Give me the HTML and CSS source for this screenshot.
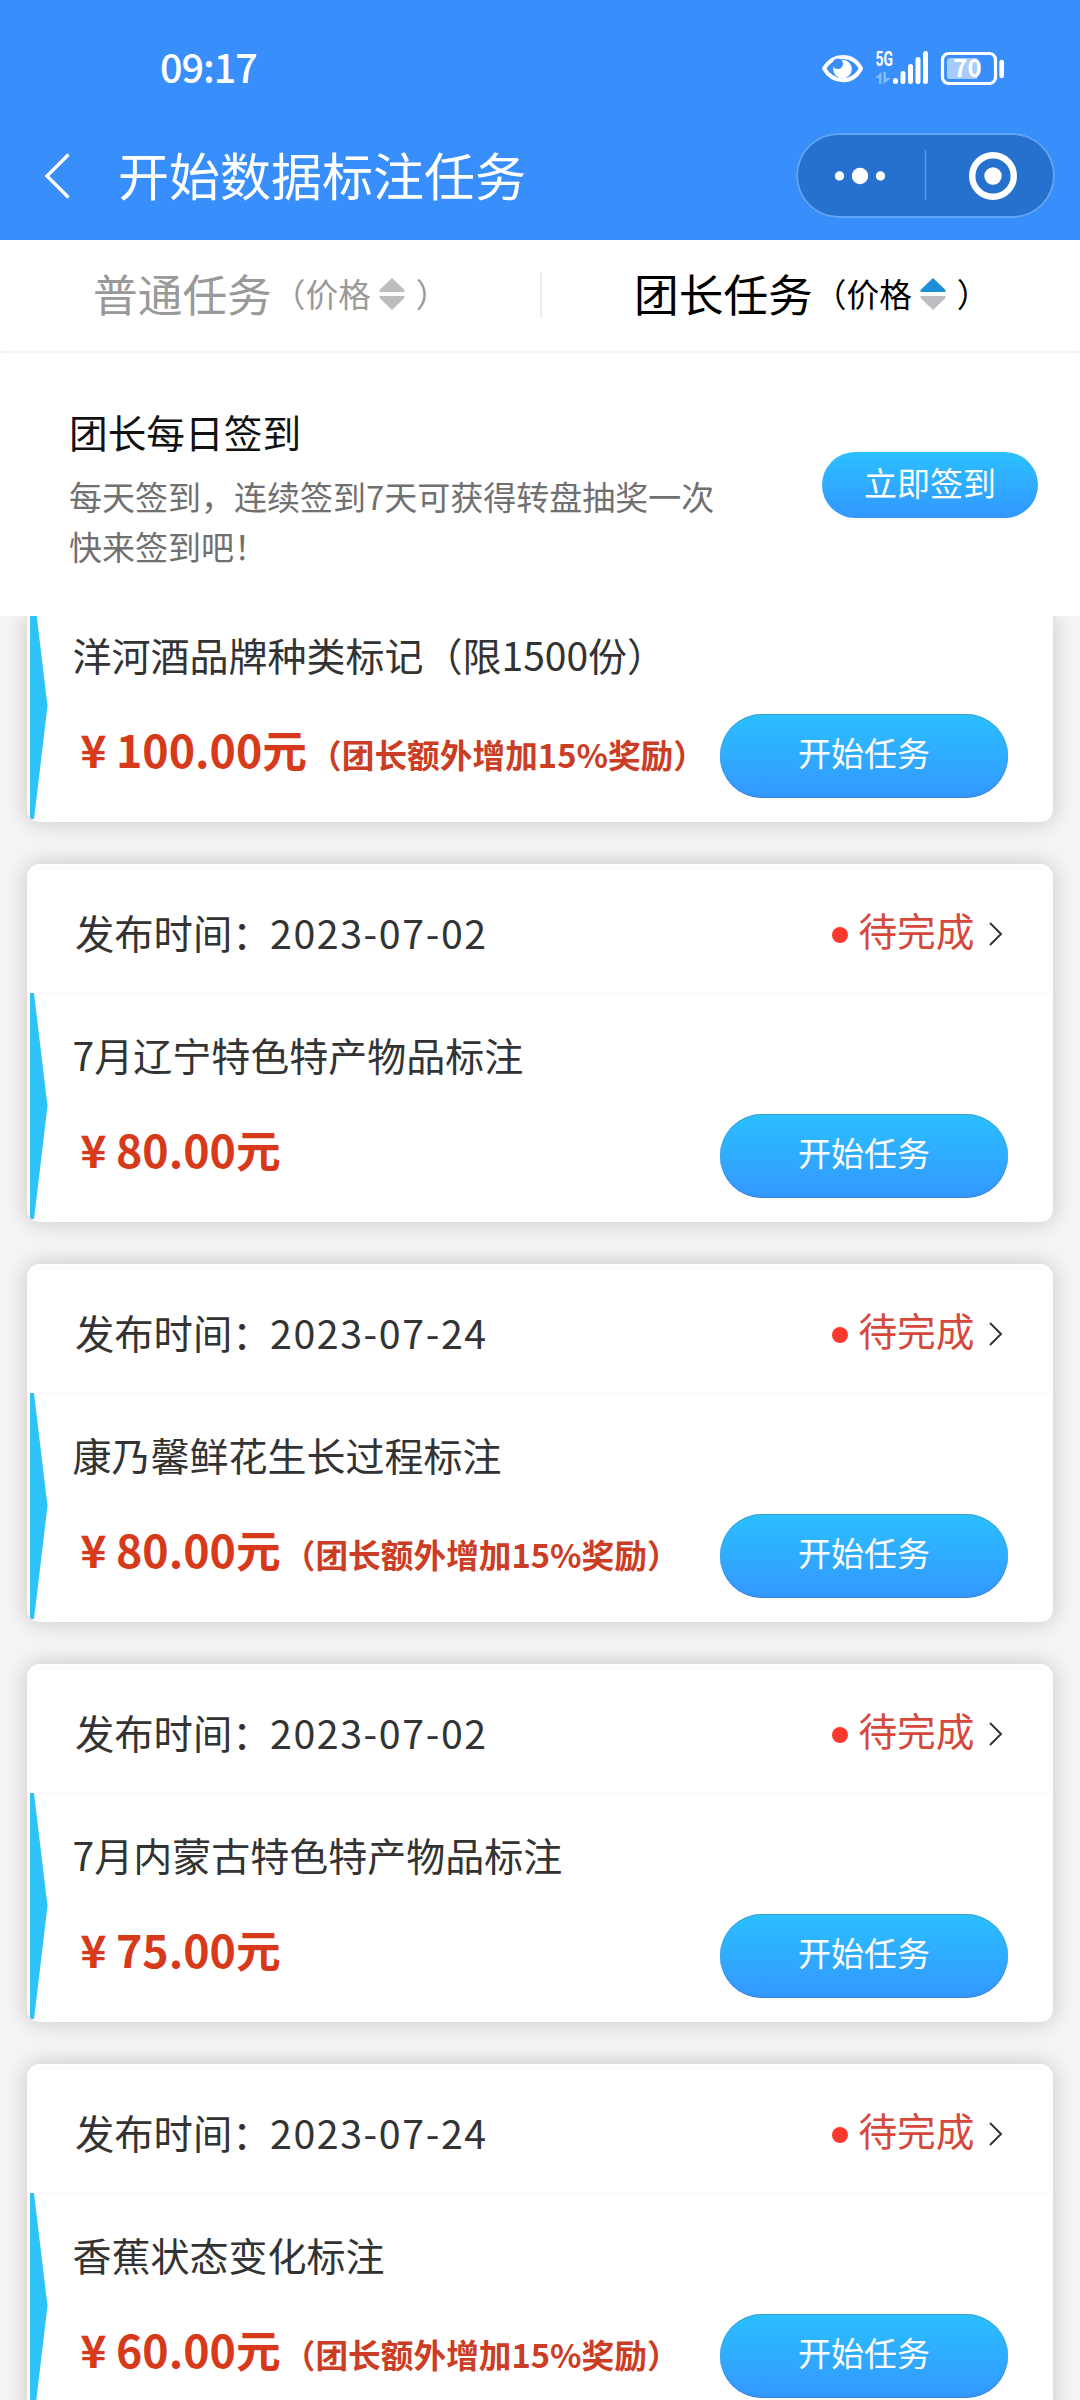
FILE: index.html
```html
<!DOCTYPE html>
<html lang="zh-CN">
<head>
<meta charset="utf-8">
<title>开始数据标注任务</title>
<link rel="stylesheet" href="styles.css">
</head>
<body>
<header class="top">
  <div class="status-bar">
    <span class="clock">09:17</span>
    <svg class="status-icons" width="190" height="50" viewBox="816 40 190 50">
      <path d="M824 68.500C833 53 853 53 861 68.500C853 84 833 84 824 68.500Z" fill="none" stroke="#fff" stroke-width="4" stroke-linejoin="round"/>
      <circle cx="842.500" cy="69" r="9.300" fill="#fff"/>
      <circle cx="837.800" cy="63.800" r="5.200" fill="#388efa"/>
      <text class="net" x="875.500" y="66" textLength="17.500" lengthAdjust="spacingAndGlyphs">5G</text>
      <path d="M875 78L881.500 72V84H879V78ZM883.500 72V84L891 78H886V72Z" fill="#86bcfd"/>
      <g stroke="#fff" stroke-width="5" stroke-linecap="round">
        <path d="M895.500 80.500V81.500M903 73.500V81.500M910.500 66.500V81.500M918 59.500V81.500M925.500 53.500V81.500"/>
      </g>
      <rect x="942.500" y="53.500" width="53" height="30" rx="6" fill="none" stroke="#fff" stroke-width="3.200"/>
      <rect x="947" y="58" width="31" height="21" rx="3" fill="#a5ccfd"/>
      <text class="charge" x="967.500" y="77" text-anchor="middle">70</text>
      <path d="M1001.700 62V76" stroke="#fff" stroke-width="4.600" stroke-linecap="round"/>
    </svg>
  </div>
  <div class="nav-bar">
    <svg class="back" width="30" height="50" viewBox="0 0 30 50"><path d="M26.500 3.500L5 25L26.500 46.500" fill="none" stroke="#fff" stroke-width="3.400"/></svg>
    <h1 class="page-title">开始数据标注任务</h1>
    <div class="capsule">
      <svg width="259" height="85" viewBox="0 0 259 85">
        <g fill="#fff">
          <circle cx="43.500" cy="43" r="4.700"/><circle cx="64" cy="43" r="8.200"/><circle cx="84.500" cy="43" r="4.700"/>
          <circle cx="197" cy="43" r="8.700"/>
        </g>
        <circle cx="197" cy="43" r="20.800" fill="none" stroke="#fff" stroke-width="6.400"/>
        <path d="M129.500 17V67" stroke="#5b97de" stroke-width="1.500"/>
      </svg>
    </div>
  </div>
</header>

<nav class="tabs">
  <div class="tab">
    <span class="tab-name">普通任务</span><span class="tab-sort">（价格</span>
    <svg class="sorter" width="28" height="34" viewBox="0 0 28 34"><path d="M14 1L26.500 13V15H1.500V13Z" fill="#bdbdbd"/><path d="M14 33L26.500 21V19H1.500V21Z" fill="#bdbdbd"/></svg>
    <span class="tab-sort">）</span>
  </div>
  <div class="tab tab-active">
    <span class="tab-name">团长任务</span><span class="tab-sort">（价格</span>
    <svg class="sorter" width="28" height="34" viewBox="0 0 28 34"><path d="M14 1L26.500 13V15H1.500V13Z" fill="#1c8fd6"/><path d="M14 33L26.500 21V19H1.500V21Z" fill="#bcbec2"/></svg>
    <span class="tab-sort">）</span>
  </div>
</nav>

<section class="checkin">
  <div class="checkin-text">
    <h2 class="checkin-title">团长每日签到</h2>
    <p class="checkin-desc">每天签到，连续签到7天可获得转盘抽奖一次<br>快来签到吧！</p>
  </div>
  <button class="btn btn-checkin">立即签到</button>
</section>

<main class="list">
  <article class="card card-cut">
    <div class="card-body">
      <svg class="flag" width="18" height="226" viewBox="0 0 18 226"><path d="M0 0H4L17.500 113L4 226H0Z" fill="#2fc2f8"/></svg>
      <h3 class="task">洋河酒品牌种类标记（限1500份）</h3>
      <div class="pay"><p class="price"><span class="yen">¥</span><span class="amount">100.00</span>元<span class="bonus">（团长额外增加15%奖励）</span></p><button class="btn btn-start">开始任务</button></div>
    </div>
  </article>

  <article class="card">
    <div class="card-head"><span class="time">发布时间：<span class="date">2023-07-02</span></span><span class="state">待完成</span>
      <svg class="more" width="16" height="26" viewBox="0 0 16 26"><path d="M2 2L13 13L2 24" fill="none" stroke="#333" stroke-width="2"/></svg></div>
    <div class="card-body">
      <svg class="flag" width="18" height="226" viewBox="0 0 18 226"><path d="M0 0H4L17.500 113L4 226H0Z" fill="#2fc2f8"/></svg>
      <h3 class="task">7月辽宁特色特产物品标注</h3>
      <div class="pay"><p class="price"><span class="yen">¥</span><span class="amount">80.00</span>元</p><button class="btn btn-start">开始任务</button></div>
    </div>
  </article>

  <article class="card">
    <div class="card-head"><span class="time">发布时间：<span class="date">2023-07-24</span></span><span class="state">待完成</span>
      <svg class="more" width="16" height="26" viewBox="0 0 16 26"><path d="M2 2L13 13L2 24" fill="none" stroke="#333" stroke-width="2"/></svg></div>
    <div class="card-body">
      <svg class="flag" width="18" height="226" viewBox="0 0 18 226"><path d="M0 0H4L17.500 113L4 226H0Z" fill="#2fc2f8"/></svg>
      <h3 class="task">康乃馨鲜花生长过程标注</h3>
      <div class="pay"><p class="price"><span class="yen">¥</span><span class="amount">80.00</span>元<span class="bonus">（团长额外增加15%奖励）</span></p><button class="btn btn-start">开始任务</button></div>
    </div>
  </article>

  <article class="card">
    <div class="card-head"><span class="time">发布时间：<span class="date">2023-07-02</span></span><span class="state">待完成</span>
      <svg class="more" width="16" height="26" viewBox="0 0 16 26"><path d="M2 2L13 13L2 24" fill="none" stroke="#333" stroke-width="2"/></svg></div>
    <div class="card-body">
      <svg class="flag" width="18" height="226" viewBox="0 0 18 226"><path d="M0 0H4L17.500 113L4 226H0Z" fill="#2fc2f8"/></svg>
      <h3 class="task">7月内蒙古特色特产物品标注</h3>
      <div class="pay"><p class="price"><span class="yen">¥</span><span class="amount">75.00</span>元</p><button class="btn btn-start">开始任务</button></div>
    </div>
  </article>

  <article class="card">
    <div class="card-head"><span class="time">发布时间：<span class="date">2023-07-24</span></span><span class="state">待完成</span>
      <svg class="more" width="16" height="26" viewBox="0 0 16 26"><path d="M2 2L13 13L2 24" fill="none" stroke="#333" stroke-width="2"/></svg></div>
    <div class="card-body">
      <svg class="flag" width="18" height="226" viewBox="0 0 18 226"><path d="M0 0H4L17.500 113L4 226H0Z" fill="#2fc2f8"/></svg>
      <h3 class="task">香蕉状态变化标注</h3>
      <div class="pay"><p class="price"><span class="yen">¥</span><span class="amount">60.00</span>元<span class="bonus">（团长额外增加15%奖励）</span></p><button class="btn btn-start">开始任务</button></div>
    </div>
  </article>
</main>
</body>
</html>
```
FILE: styles.css
```css
* { box-sizing: border-box; }
body {
  margin: 0;
  width: 1080px;
  height: 2400px;
  overflow: hidden;
  display: flex;
  flex-direction: column;
  background: #f6f4f6;
  color: #333;
  font-family: "Noto Sans CJK SC", sans-serif;
}
h1, h2, h3, p { margin: 0; font-weight: 400; }
svg { display: block; flex: none; }

.top { flex: none; height: 240px; background: #388efa; color: #fff; }
.status-bar { display: flex; justify-content: space-between; height: 133px; padding: 40px 74px 0 160px; }
.clock { padding-top: 4px; font-size: 39.500px; line-height: 44px; font-weight: 500; letter-spacing: -1px; }
.net { fill: #fff; font: 700 20.500px Roboto, sans-serif; }
.charge { fill: #fff; font-size: 24px; font-weight: 700; }
.nav-bar { display: flex; height: 85px; padding: 0 25px 0 42px; align-items: center; }
.page-title { margin-left: 46px; padding-bottom: 3px; font-size: 51px; line-height: 82px; white-space: nowrap; }
.capsule {
  margin-left: auto;
  width: 259px;
  height: 85px;
  border-radius: 43px;
  background: #2671cd;
  box-shadow: inset 0 0 0 2px #60a4f6;
}

.tabs {
  flex: none;
  display: grid;
  grid-template-columns: 540px 540px;
  height: 113px;
  background: #fff;
  border-bottom: 2px dotted #efefef;
}
.tab { display: flex; align-items: center; height: 104px; padding-left: 93px; color: #999; white-space: nowrap; }
.tab-active { color: #000; padding-left: 94px; background: linear-gradient(#eee, #eee) 0 32px / 2px 46px no-repeat; }
.tab-name { font-size: 44.700px; }
.tab-sort { font-size: 32.700px; }
.tab-name + .tab-sort { margin-left: 1px; }
.sorter { margin: 3px 10px 0 7px; }

.checkin { flex: none; display: flex; justify-content: space-between; height: 263px; padding: 49px 42px 0 69px; background: #fff; }
.checkin-title { font-size: 38.700px; line-height: 58px; color: #111; }
.checkin-desc { margin-top: 11px; font-size: 33px; line-height: 50px; color: #707070; white-space: nowrap; }
.btn {
  flex: none;
  border: 0;
  padding: 0;
  color: #fff;
  font: 400 33px/1 "Noto Sans CJK SC", sans-serif;
  background: linear-gradient(#2bc0ff, #3397ff);
}
.btn-checkin { width: 216px; height: 66px; margin-top: 50px; padding-bottom: 6px; border-radius: 33px; }

.list { flex: none; display: flex; flex-direction: column; gap: 42px; height: 1784px; padding: 0 27px; overflow: hidden; }
.card {
  flex: none;
  height: 358px;
  background: #fff;
  border-radius: 13px;
  box-shadow: 0 0 22px rgba(60, 50, 60, .25);
  overflow: hidden;
}
.card-cut { height: 206px; border-radius: 0 0 13px 13px; }
.card-cut .card-body { margin-top: -23px; }
.card-head {
  display: flex;
  align-items: center;
  height: 124px;
  margin: 5px 3px 0;
  padding: 0 46px 0 45px;
  border-radius: 10px 10px 0 0;
  box-shadow: 0 0 3px rgba(0, 0, 0, .07);
}
.card-head .time { font-size: 39.300px; flex: 1; white-space: nowrap; }
.date { margin-left: -1.500px; letter-spacing: 1.600px; }
.state { display: flex; align-items: center; gap: 10px; color: #d5483b; font-size: 38.700px; padding-bottom: 4px; }
.state::before { content: ""; width: 16px; height: 16px; margin-top: 12px; border-radius: 50%; background: #f93a2c; }
.more { margin-left: 13.500px; margin-top: 6px; }

.card-body { display: grid; grid-template-columns: 18px 1fr; grid-template-rows: 121px 105px; padding-left: 3px; }
.flag { grid-row: 1 / 3; }
.task { padding-left: 24.500px; font-size: 39px; line-height: 123px; white-space: nowrap; color: #333; }
.pay { display: flex; justify-content: space-between; padding: 0 45px 0 23px; }
.price { padding-top: 2px; font-size: 44.700px; line-height: 66px; font-weight: 700; color: #d63a1a; white-space: nowrap; }
.yen { display: inline-block; width: 45px; text-align: center; }
.bonus { margin-left: 2px; font-size: 32.700px; color: #cb3d24; }
.btn-start { width: 288px; height: 84px; border-radius: 42px; padding-bottom: 8px; box-shadow: inset 0 -1px 1px #3c82d8, inset 0 1px 1px #3a9fce; }
```
